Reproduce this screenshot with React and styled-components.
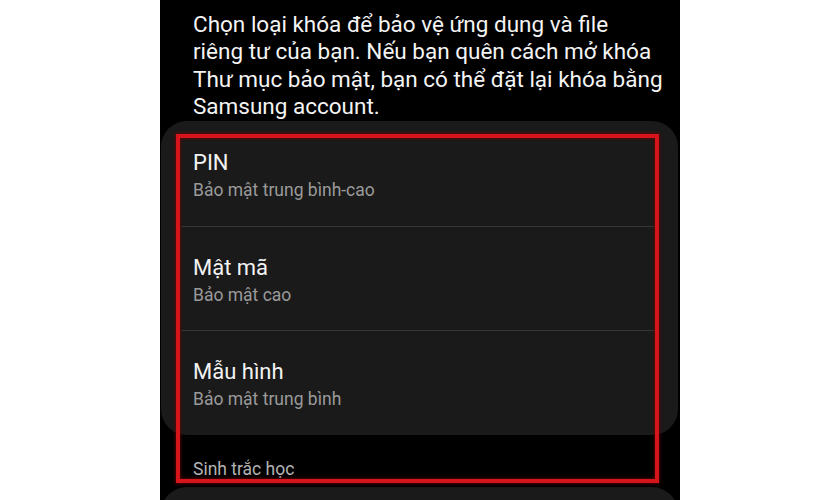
import React from "react";
import styled, { createGlobalStyle } from "styled-components";

const GlobalStyle = createGlobalStyle`
  body {
    margin: 0;
    background: #ffffff;
  }
`;

const options = [
  { title: "PIN", level: "Bảo mật trung bình-cao" },
  { title: "Mật mã", level: "Bảo mật cao" },
  { title: "Mẫu hình", level: "Bảo mật trung bình" },
];

const App = () => {
  return (
    <>
      <GlobalStyle />
      <Screen>
        <Intro>
          Chọn loại khóa để bảo vệ ứng dụng và file
          <br />
          riêng tư của bạn. Nếu bạn quên cách mở khóa
          <br />
          Thư mục bảo mật, bạn có thể đặt lại khóa bằng
          <br />
          Samsung account.
        </Intro>
        <Card>
          {options.map(opt => (
            <Option key={opt.title}>
              <OptionTitle>{opt.title}</OptionTitle>
              <OptionLevel>{opt.level}</OptionLevel>
            </Option>
          ))}
        </Card>
        <SectionLabel>Sinh trắc học</SectionLabel>
        <NextCard />
        <Highlight />
      </Screen>
    </>
  );
};

export default App;

const Screen = styled.div`
  position: relative;
  width: 520px;
  height: 500px;
  margin: 0 auto;
  background: #000000;
  overflow: hidden;
  font-family: Roboto, "Noto Sans", sans-serif;
`;

const Intro = styled.p`
  margin: 0;
  padding: 10.5px 10px 0 33px;
  font-size: 22.5px;
  line-height: 27.5px;
  color: #f4f4f4;
  white-space: nowrap;
`;

const Card = styled.div`
  margin: 0 2px 0 1px;
  padding-top: 1.5px;
  background: #1a1a1a;
  border-radius: 26px;
`;

const Option = styled.div`
  display: flex;
  flex-direction: column;
  gap: 2px;
  margin: 0 20px;
  padding: 27px 0 24.5px 12px;
  border-bottom: 1px solid #363636;

  &:last-child {
    border-bottom: none;
  }
`;

const OptionTitle = styled.span`
  font-size: 22px;
  line-height: 28px;
  color: #f3f3f3;
`;

const OptionLevel = styled.span`
  font-size: 17.5px;
  line-height: 22px;
  color: #9a9a9a;
`;

const SectionLabel = styled.div`
  margin: 23px 0 7px 33px;
  font-size: 17.5px;
  line-height: 22px;
  color: #b4b4b4;
`;

const NextCard = styled.div`
  margin: 0 2px 0 1px;
  height: 60px;
  background: #1a1a1a;
  border-radius: 26px 26px 0 0;
`;

const Highlight = styled.div`
  position: absolute;
  left: 16px;
  top: 134px;
  width: 483px;
  height: 349px;
  box-sizing: border-box;
  border: 4px solid #d5141c;
  box-shadow: 0 0 3px 1px rgba(110, 0, 0, 0.7),
    inset 0 0 3px 1px rgba(110, 0, 0, 0.7);
  pointer-events: none;
`;
